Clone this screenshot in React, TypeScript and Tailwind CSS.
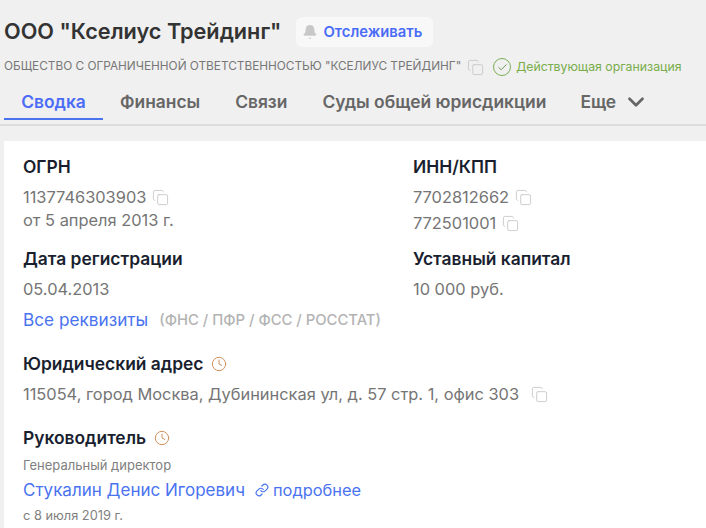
import { Bell, Check, ChevronDown, Clock, Copy, Link } from "lucide-react";

const tabs = ["Финансы", "Связи", "Суды общей юрисдикции"];

function CopyIcon({ className }: { className: string }) {
  return <Copy size={17} strokeWidth={1.25} className={`shrink-0 text-[#c8c8c8] ${className}`} />;
}

function Label({ children }: { children: React.ReactNode }) {
  return <div className="text-[17.4px] leading-[20px] font-semibold text-[#1a1f30]">{children}</div>;
}

function History() {
  return <Clock size={16} strokeWidth={1.5} className="text-[#d0905c]" />;
}

export default function App() {
  return (
    <div className="h-[528px] w-[706px] overflow-hidden bg-[#f0f0f0] font-['Inter',sans-serif] text-[#757575]">
      <header className="h-[126px] border-b-2 border-[#dcdcdc] pl-1 pt-[16px]">
        <div className="flex h-[30px] items-center">
          <h1 className="text-[21.7px] leading-[30px] font-semibold whitespace-nowrap text-[#333333]">ООО "Кселиус Трейдинг"</h1>
          <button className="mt-[2px] ml-[15px] flex h-[30px] w-[137px] items-center rounded-md bg-[#f8f8f8] pl-1.5 text-[14.8px] font-semibold text-[#4a6cf7]">
            <Bell size={16} fill="#c8c8c8" strokeWidth={1} className="mr-[5px] text-[#c8c8c8]" />
            Отслеживать
          </button>
        </div>
        <div className="mt-[11px] flex h-[20px] items-center whitespace-nowrap">
          <span className="text-[11.8px] text-[#777777]">ОБЩЕСТВО С ОГРАНИЧЕННОЙ ОТВЕТСТВЕННОСТЬЮ "КСЕЛИУС ТРЕЙДИНГ"</span>
          <CopyIcon className="ml-[6px]" />
          <span className="ml-[9px] flex h-[18px] w-[18px] items-center justify-center rounded-full border border-[#7cae5a]">
            <Check size={11} strokeWidth={2} className="text-[#5e8f45]" />
          </span>
          <span className="ml-[5px] text-[12.3px] text-[#78ad4a]">Действующая организация</span>
        </div>
        <nav className="mt-[5px] flex h-[38px] items-start text-[17.4px] font-semibold whitespace-nowrap">
          <div className="h-[38px] w-[99px] border-b-2 border-[#4a73f0] pt-[10px] text-center leading-[20px] text-[#4a6cf7]">Сводка</div>
          <div className="ml-[17px] flex gap-[35px] pt-[10px] leading-[20px] text-[#666666]">
            {tabs.map((tab) => (
              <div key={tab}>{tab}</div>
            ))}
            <div className="-ml-[1px] flex h-[20px] items-center">
              Еще
              <ChevronDown size={26} strokeWidth={2.5} className="ml-[7px]" />
            </div>
          </div>
        </nav>
      </header>
      <div className="h-[15px]" />
      <main className="ml-1 h-[387px] bg-white pl-[19px] pt-[16px] text-[16.4px] leading-[20px]">
        <div className="grid grid-cols-[390px_1fr]">
          <div>
            <Label>ОГРН</Label>
            <div className="mt-[10px] flex h-[20px] items-center">
              1137746303903
              <CopyIcon className="ml-[6px]" />
            </div>
            <div className="mt-[3px]">от 5 апреля 2013 г.</div>
            <div className="mt-[19px]"><Label>Дата регистрации</Label></div>
            <div className="mt-[10px]">05.04.2013</div>
          </div>
          <div>
            <Label>ИНН/КПП</Label>
            <div className="mt-[10px] flex h-[20px] items-center">
              7702812662
              <CopyIcon className="ml-[6px]" />
            </div>
            <div className="mt-[6px] flex h-[20px] items-center">
              772501001
              <CopyIcon className="ml-[6px]" />
            </div>
            <div className="mt-[16px]"><Label>Уставный капитал</Label></div>
            <div className="mt-[10px]">10 000 руб.</div>
          </div>
        </div>
        <div className="mt-[11px] flex items-center whitespace-nowrap">
          <span className="text-[17.2px] text-[#4a73f0]">Все реквизиты</span>
          <span className="ml-[11px] text-[14.8px] font-medium text-[#b3b3b3]">(ФНС / ПФР / ФСС / РОССТАТ)</span>
        </div>
        <div className="mt-[24px] flex items-center gap-[8px]">
          <Label>Юридический адрес</Label>
          <History />
        </div>
        <div className="mt-[10px] flex items-center whitespace-nowrap">
          115054, город Москва, Дубининская ул, д. 57 стр. 1, офис 303
          <CopyIcon className="ml-[12px]" />
        </div>
        <div className="mt-[24px] flex items-center gap-[8px]">
          <Label>Руководитель</Label>
          <History />
        </div>
        <div className="mt-[9px] text-[13px] leading-[16px] text-[#808080]">Генеральный директор</div>
        <div className="mt-[7px] flex items-center whitespace-nowrap text-[#4a73f0]">
          <span className="text-[17px]">Стукалин Денис Игоревич</span>
          <Link size={14} strokeWidth={2} className="ml-[10px] mr-[4px]" />
          <span>подробнее</span>
        </div>
        <div className="mt-[8px] text-[12.8px] leading-[16px] text-[#808080]">с 8 июля 2019 г.</div>
      </main>
    </div>
  );
}
